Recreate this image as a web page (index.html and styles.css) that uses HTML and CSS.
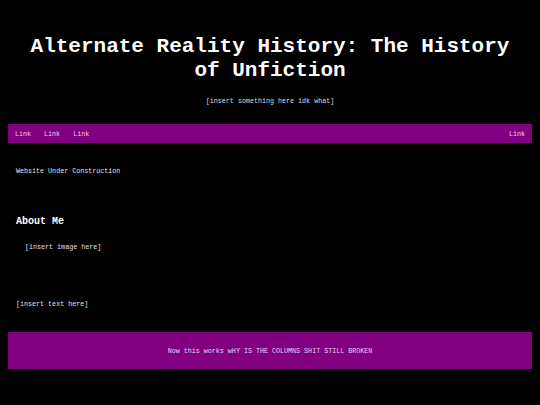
FILE: index.html
```html
<!DOCTYPE html>
<html>
<head>
<meta charset="utf-8">
<link rel="stylesheet" href="styles.css">
</head>
<body>
<header class="header">
  <h1 class="title">Alternate Reality History: The History of Unfiction</h1>
  <p class="subtitle">[insert something here idk what]</p>
</header>
<nav class="nav">
  <div class="nav-left">
    <a class="nav-link" href="#">Link</a>
    <a class="nav-link" href="#">Link</a>
    <a class="nav-link" href="#">Link</a>
  </div>
  <a class="nav-link" href="#">Link</a>
</nav>
<main class="content">
  <p class="text notice">Website Under Construction</p>
  <h2 class="heading">About Me</h2>
  <p class="text image-ph">[insert image here]</p>
  <p class="text text-ph">[insert text here]</p>
</main>
<footer class="footer">
  <p class="text">Now this works wHY IS THE COLUMNS SHIT STILL BROKEN</p>
</footer>
</body>
</html>
```
FILE: styles.css
```css
html, body {
  background: #000;
}
body {
  margin: 8px;
  color: #fff;
  font-family: "Liberation Mono", "DejaVu Sans Mono", monospace;
  font-size: 6.7px;
  line-height: 8px;
}
p { margin: 0; }
.header {
  text-align: center;
  padding-top: 27px;
}
.title {
  margin: 0 20px;
  font-size: 21px;
  line-height: 24px;
  font-weight: bold;
}
.subtitle {
  margin-top: 14px;
  color: #ddd;
}
.nav {
  margin-top: 19px;
  height: 19px;
  background: #800080;
  display: flex;
  align-items: center;
  justify-content: space-between;
  padding: 0 7px;
}
.nav-left {
  display: flex;
  gap: 13px;
}
.nav-link {
  color: #f0d0f0;
  text-decoration: none;
}
.content {
  padding: 0 8px;
}
.notice {
  margin-top: 24px;
  color: #e0e0e0;
}
.heading {
  margin: 41px 0 0;
  font-size: 10px;
  line-height: 12px;
  font-weight: bold;
}
.image-ph {
  margin-top: 15px;
  padding-left: 9px;
  color: #e0e0e0;
}
.text-ph {
  margin-top: 49px;
  color: #e0e0e0;
}
.footer {
  margin-top: 24px;
  height: 37px;
  background: #800080;
  display: flex;
  align-items: center;
  justify-content: center;
  color: #f0d0f0;
}
```
